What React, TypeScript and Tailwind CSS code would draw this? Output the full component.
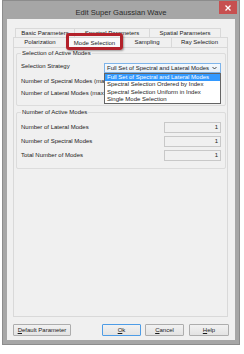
import React from "react";

function Tab({ label, w, first, selected }: { label: string; w: string; first?: boolean; selected?: boolean }) {
  return (
    <div
      className={[
        "flex items-center justify-center border-t border-r border-[#d9d9d9] text-[6px] leading-[7px] text-[#1a1a1a] whitespace-nowrap",
        w,
        first ? "border-l" : "",
        selected ? "relative z-10 bg-[#fafafa] h-[11px] -mb-[1px]" : "bg-[#f0f0f0] h-full",
      ].join(" ")}
    >
      {label}
    </div>
  );
}

function Btn({ w, children, def }: { w: string; children: React.ReactNode; def?: boolean }) {
  return (
    <div
      className={[
        "h-[12px] flex items-center justify-center text-[6px] leading-[7px] text-[#1a1a1a] rounded-[1px] border bg-gradient-to-b from-[#f2f2f2] to-[#e3e3e3]",
        def ? "border-[#4d9ce6]" : "border-[#adadad]",
        w,
      ].join(" ")}
    >
      {children}
    </div>
  );
}

export default function App() {
  return (
    <div className="w-[244px] h-[354px] bg-white font-['Liberation_Sans',Arial,sans-serif]">
      <div className="ml-[2px] w-[238px] h-[345px] bg-[#a6a6a6] border border-[#8c8c8c] flex flex-col">
        {/* title bar */}
        <div className="relative h-[18px] shrink-0 flex justify-center pt-[7px]">
          <span className="text-[7.6px] leading-[9px] text-[#2b2b2b] whitespace-nowrap">Edit Super Gaussian Wave</span>
          <div className="absolute top-0 right-[2px] w-[18px] h-[13px] bg-[#c75050] flex items-center justify-center">
            <svg width="6" height="6" viewBox="0 0 6 6">
              <path d="M0.5 0.5 L5.5 5.5 M5.5 0.5 L0.5 5.5" stroke="#fff" strokeWidth="1.3" />
            </svg>
          </div>
        </div>
        {/* client */}
        <div className="relative mx-[4px] h-[321px] bg-[#f0f0f0] flex flex-col pt-[9px]">
          {/* tab row 1 */}
          <div className="flex ml-[8px] h-[9px] shrink-0">
            <Tab label="Basic Parameters" w="w-[60px]" first />
            <Tab label="Spectral Parameters" w="w-[75px]" />
            <Tab label="Spatial Parameters" w="w-[71px]" />
          </div>
          {/* tab row 2 */}
          <div className="flex items-end ml-[6px] h-[10px] shrink-0">
            <Tab label="Polarization" w="w-[54px]" first />
            <Tab label="Mode Selection" w="w-[56px]" selected />
            <Tab label="Sampling" w="w-[49px]" />
            <Tab label="Ray Selection" w="w-[56px]" />
          </div>
          {/* panel */}
          <div className="ml-[6px] w-[215px] h-[270px] shrink-0 border border-[#d9d9d9] bg-[#f0f0f0] pl-[2px] pt-[5px] text-[6px] leading-[7px] text-[#222]">
            {/* group 1 */}
            <div className="relative w-[210px] border border-[#dcdcdc] rounded-[2px] pt-[9px] pb-[5px] pl-[4px] pr-[4px]">
              <span className="absolute -top-[4px] left-[4px] px-[1px] bg-[#f0f0f0] whitespace-nowrap">Selection of Active Modes</span>
              <div className="flex h-[10px] items-start">
                <span className="whitespace-nowrap">Selection Strategy</span>
                <div className="relative ml-auto w-[117px] h-[10px]">
                  <div className="h-full border border-[#7eb4ea] bg-gradient-to-b from-[#f4f9fd] to-[#e6f0fa] flex items-center pl-[2px] pr-[3px]">
                    <span className="whitespace-nowrap">Full Set of Spectral and Lateral Modes</span>
                    <svg className="ml-auto" width="5" height="4" viewBox="0 0 5 4">
                      <path d="M0.5 1 L2.5 3 L4.5 1" stroke="#333" strokeWidth="0.9" fill="none" />
                    </svg>
                  </div>
                  <div className="absolute top-[10px] left-0 w-full z-20 bg-white border border-[#646464] flex flex-col">
                    <div className="h-[7.25px] leading-[7.25px] pl-[2px] bg-[#3399ff] text-white whitespace-nowrap">Full Set of Spectral and Lateral Modes</div>
                    <div className="h-[7.25px] leading-[7.25px] pl-[2px] whitespace-nowrap">Spectral Selection Ordered by Index</div>
                    <div className="h-[7.25px] leading-[7.25px] pl-[2px] whitespace-nowrap">Spectral Selection Uniform in Index</div>
                    <div className="h-[7.25px] leading-[7.25px] pl-[2px] whitespace-nowrap">Single Mode Selection</div>
                  </div>
                </div>
              </div>
              <div className="flex h-[10px] mt-[5px] items-start">
                <span className="whitespace-nowrap">Number of Spectral Modes (max. 100)</span>
                <div className="ml-auto w-[57px] h-[10px] border border-[#c5c5c5] bg-white" />
              </div>
              <div className="flex h-[10px] mt-[2px] items-start">
                <span className="whitespace-nowrap">Number of Lateral Modes (max. 100)</span>
                <div className="ml-auto w-[57px] h-[10px] border border-[#c5c5c5] bg-white" />
              </div>
            </div>
            {/* group 2 */}
            <div className="relative mt-[6px] w-[210px] border border-[#dcdcdc] rounded-[2px] pt-[9px] pb-[7px] pl-[4px] pr-[4px] flex flex-col gap-[3px]">
              <span className="absolute -top-[4px] left-[4px] px-[1px] bg-[#f0f0f0] whitespace-nowrap">Number of Active Modes</span>
              {["Number of Lateral Modes", "Number of Spectral Modes", "Total Number of Modes"].map((l) => (
                <div key={l} className="flex h-[11px] items-center">
                  <span className="whitespace-nowrap">{l}</span>
                  <div className="ml-auto w-[57px] h-[11px] border border-[#c8c8c8] bg-[#f0f0f0] flex items-center justify-end pr-[2px]">
                    1
                  </div>
                </div>
              ))}
            </div>
          </div>
          {/* buttons */}
          <div className="mt-[7px] ml-[6px] w-[216px] flex">
            <Btn w="w-[58px]">
              <span className="underline">D</span>efault Parameter
            </Btn>
            <div className="w-[31px]" />
            <Btn w="w-[39px]" def>
              <span className="underline">O</span>k
            </Btn>
            <div className="w-[4px]" />
            <Btn w="w-[39px]">
              <span className="underline">C</span>ancel
            </Btn>
            <div className="w-[5px]" />
            <Btn w="w-[40px]">
              <span className="underline">H</span>elp
            </Btn>
          </div>
          {/* annotation highlight */}
          <div className="absolute left-[59px] top-[14px] w-[57px] h-[17px] rounded-[3px] border-[3px] border-[#b3222b] shadow-[1px_1px_2px_rgba(0,0,0,0.35)] z-30 pointer-events-none" />
        </div>
      </div>
    </div>
  );
}
